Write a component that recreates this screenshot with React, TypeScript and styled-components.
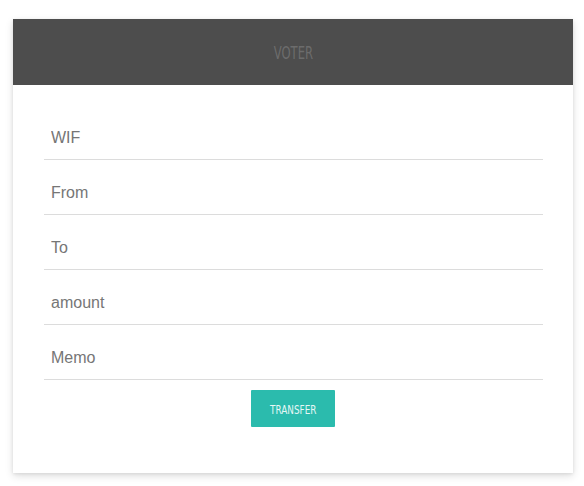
import React from "react";
import styled, { createGlobalStyle } from "styled-components";

const Global = createGlobalStyle`
  html, body { margin: 0; padding: 0; background: #ffffff; }
  body { font-family: "Liberation Sans", Arial, sans-serif; }
`;

const Page = styled.div`
  padding: 19px 11px 13px 13px;
`;

const Card = styled.div`
  width: 560px;
  background: #ffffff;
  box-shadow: 0 3px 8px rgba(0, 0, 0, 0.13), 0 1px 3px rgba(0, 0, 0, 0.08);
  display: flex;
  flex-direction: column;
`;

const Header = styled.div`
  height: 66px;
  background: #4d4d4d;
  display: flex;
  align-items: center;
  justify-content: center;
`;

const Title = styled.h1`
  margin: 0;
  font-family: "DejaVu Sans Condensed", "DejaVu Sans", sans-serif;
  font-stretch: condensed;
  font-weight: 400;
  font-size: 17px;
  color: #6c6c6c;
  transform: translate(0.5px, 1px) scaleX(0.76);
`;

const Form = styled.form`
  padding: 20px 30px 46px 31px;
  display: flex;
  flex-direction: column;
  align-items: center;
`;

const Field = styled.input`
  box-sizing: border-box;
  width: 100%;
  height: 55px;
  padding: 23px 0 11px 7px;
  border: none;
  border-bottom: 1px solid #dcdcdc;
  outline: none;
  background: transparent;
  font-family: "Liberation Sans", Arial, sans-serif;
  font-size: 16px;
  line-height: 20px;
  color: #444;
  &::placeholder {
    color: #767676;
    opacity: 1;
  }
`;

const Button = styled.button`
  margin: 10px 1px 0 0;
  width: 84px;
  height: 37px;
  border: none;
  border-radius: 1px;
  background: #2bbbad;
  color: #e6f7f5;
  cursor: pointer;
  padding: 0;
  display: flex;
  align-items: center;
  justify-content: center;
`;

const ButtonLabel = styled.span`
  font-family: "DejaVu Sans Condensed", "DejaVu Sans", sans-serif;
  font-stretch: condensed;
  font-size: 12px;
  text-transform: uppercase;
  display: inline-block;
  transform: translateY(1px) scaleX(0.82);
`;

const fields = ["WIF", "From", "To", "amount", "Memo"];

export default function App() {
  return (
    <>
      <Global />
      <Page>
        <Card>
          <Header>
            <Title>VOTER</Title>
          </Header>
          <Form onSubmit={(e) => e.preventDefault()}>
            {fields.map((f) => (
              <Field key={f} type="text" placeholder={f} />
            ))}
            <Button type="submit">
              <ButtonLabel>Transfer</ButtonLabel>
            </Button>
          </Form>
        </Card>
      </Page>
    </>
  );
}
